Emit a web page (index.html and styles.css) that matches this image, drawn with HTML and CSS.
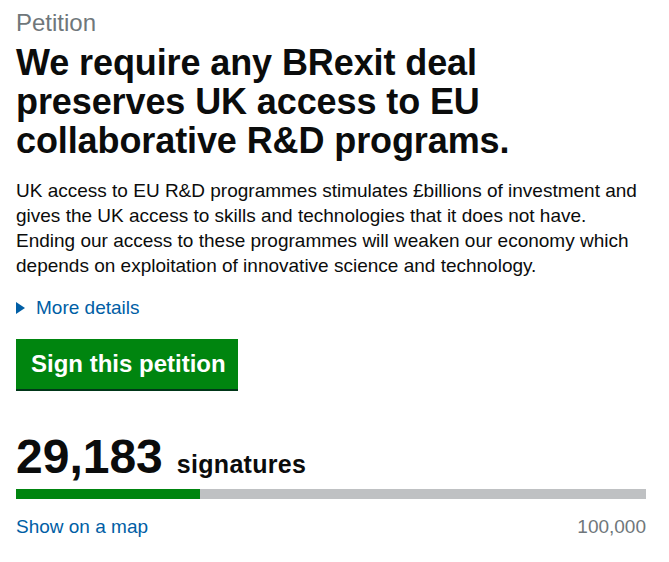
FILE: index.html
```html
<!DOCTYPE html>
<html lang="en">
<head>
<meta charset="utf-8">
<title>Petition</title>
<link rel="stylesheet" href="styles.css">
</head>
<body>
<main class="page">
  <p class="kicker">Petition</p>
  <h1 class="title">We require any BRexit deal preserves UK access to EU collaborative R&amp;D programs.</h1>
  <p class="summary">UK access to EU R&amp;D programmes stimulates £billions of investment and gives the UK access to skills and technologies that it does not have. Ending our access to these programmes will weaken our economy which depends on exploitation of innovative science and technology.</p>
  <a class="details" href="#"><span class="arrow"></span>More details</a>
  <a class="button" href="#">Sign this petition</a>
  <div class="count"><span class="num">29,183</span><span class="label">signatures</span></div>
  <div class="bar"><div class="fill" style="width:29.18%"></div></div>
  <div class="foot">
    <a class="link" href="#">Show on a map</a>
    <span class="target">100,000</span>
  </div>
</main>
</body>
</html>
```

FILE: styles.css
```css
* { box-sizing: border-box; }
html, body { margin: 0; padding: 0; background: #fff; }
body {
  font-family: "Liberation Sans", Arial, Helvetica, sans-serif;
  color: #0b0c0c;
}
.page {
  padding: 8px 23px 0 16px;
  display: flex;
  flex-direction: column;
  align-items: flex-start;
}
.kicker {
  margin: 0;
  font-size: 24px;
  line-height: 30px;
  color: #6f777b;
}
.title {
  margin: 5px 0 0;
  font-size: 36px;
  line-height: 39px;
  font-weight: bold;
  letter-spacing: -0.1px;
}
.summary {
  margin: 18px 0 0;
  font-size: 19px;
  line-height: 25px;
}
.details {
  margin-top: 17px;
  display: flex;
  align-items: center;
  font-size: 19px;
  line-height: 25px;
  color: #005ea5;
  text-decoration: none;
}
.arrow {
  width: 0; height: 0;
  border-left: 9px solid #005ea5;
  border-top: 6px solid transparent;
  border-bottom: 6px solid transparent;
  margin-right: 11px;
}
.button {
  margin-top: 19px;
  background: #00850f;
  color: #fff;
  font-weight: bold;
  font-size: 24px;
  line-height: 28px;
  padding: 11px 0 11px 15px;
  box-shadow: 0 2px 0 #003618;
  text-decoration: none;
  white-space: nowrap;
  width: 222px;
  height: 50px;
}
.count {
  margin-top: 43px;
  display: flex;
  align-items: baseline;
  gap: 14px;
}
.num {
  font-size: 48px;
  line-height: 50px;
  font-weight: bold;
}
.label {
  font-size: 25px;
  font-weight: bold;
  letter-spacing: 0.3px;
}
.bar {
  margin-top: 7px;
  width: 630px;
  height: 10px;
  background: #bfc1c3;
}
.fill {
  height: 100%;
  background: #00850f;
}
.foot {
  margin-top: 15px;
  width: 630px;
  display: flex;
  justify-content: space-between;
  font-size: 19px;
  line-height: 25px;
}
.link { color: #005ea5; text-decoration: none; }
.target { color: #6f777b; }
```
